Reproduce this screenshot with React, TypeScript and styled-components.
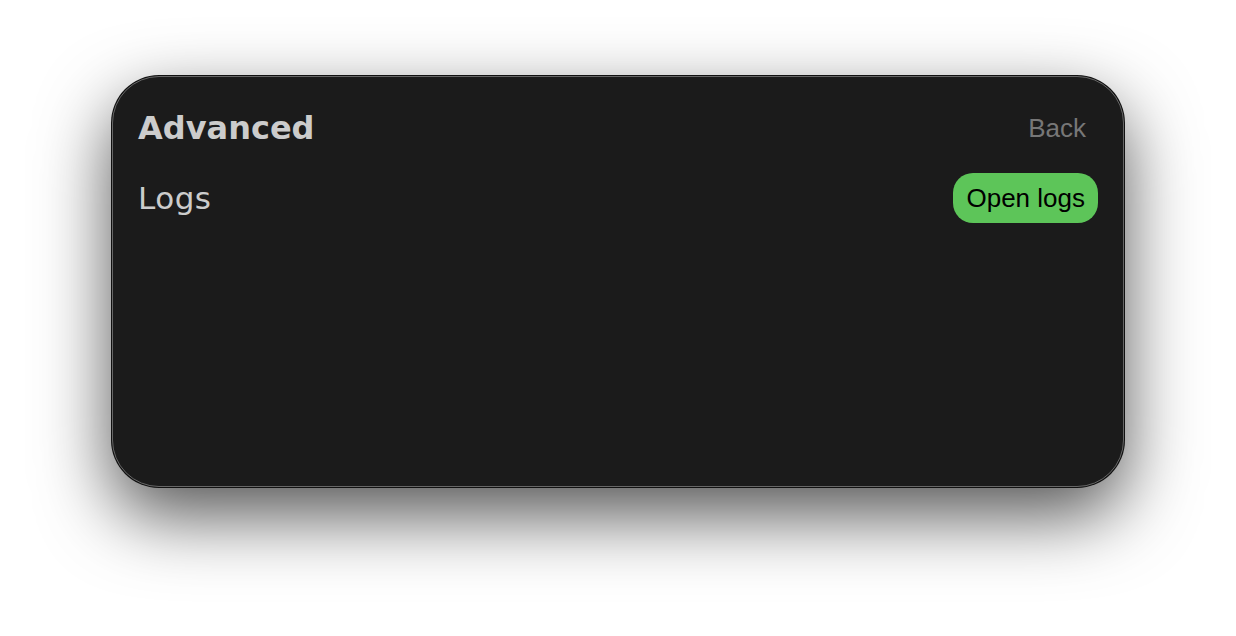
import React from "react";
import styled, { createGlobalStyle } from "styled-components";

const Global = createGlobalStyle`
  html, body { margin: 0; padding: 0; background: #ffffff; }
  body { font-family: "DejaVu Sans", sans-serif; }
`;

const Page = styled.div`
  width: 1236px;
  height: 636px;
  box-sizing: border-box;
  padding: 76px 112px 0;
`;

const Card = styled.section`
  box-sizing: border-box;
  height: 411px;
  background: #1b1b1b;
  border: 1.5px solid #666666;
  border-radius: 47px;
  box-shadow: 0 0 0 1px #111111, 0 28px 72px rgba(0, 0, 0, 0.68);
  padding: 32px 25px;
  display: flex;
  flex-direction: column;
  gap: 26px;
`;

const Header = styled.div`
  display: flex;
  align-items: center;
  justify-content: space-between;
`;

const Title = styled.h1`
  margin: 0;
  font-family: "DejaVu Sans", sans-serif;
  font-weight: bold;
  font-size: 32px;
  color: #cccccc;
`;

const BackButton = styled.button`
  background: none;
  border: none;
  padding: 0 12px;
  font-family: "Liberation Sans", Arial, sans-serif;
  font-size: 26px;
  color: #777777;
  cursor: pointer;
`;

const Row = styled.div`
  display: flex;
  align-items: center;
  justify-content: space-between;
`;

const Label = styled.span`
  font-family: "DejaVu Sans", sans-serif;
  font-size: 31px;
  letter-spacing: 0.5px;
  color: #cccccc;
`;

const PillButton = styled.button`
  height: 50px;
  padding: 0 13px;
  border: none;
  border-radius: 20px;
  background: #5dc559;
  color: #000000;
  font-family: "Liberation Sans", Arial, sans-serif;
  font-size: 26px;
  cursor: pointer;
`;

export default function App() {
  return (
    <>
      <Global />
      <Page>
        <Card>
          <Header>
            <Title>Advanced</Title>
            <BackButton>Back</BackButton>
          </Header>
          <Row>
            <Label>Logs</Label>
            <PillButton>Open logs</PillButton>
          </Row>
        </Card>
      </Page>
    </>
  );
}
